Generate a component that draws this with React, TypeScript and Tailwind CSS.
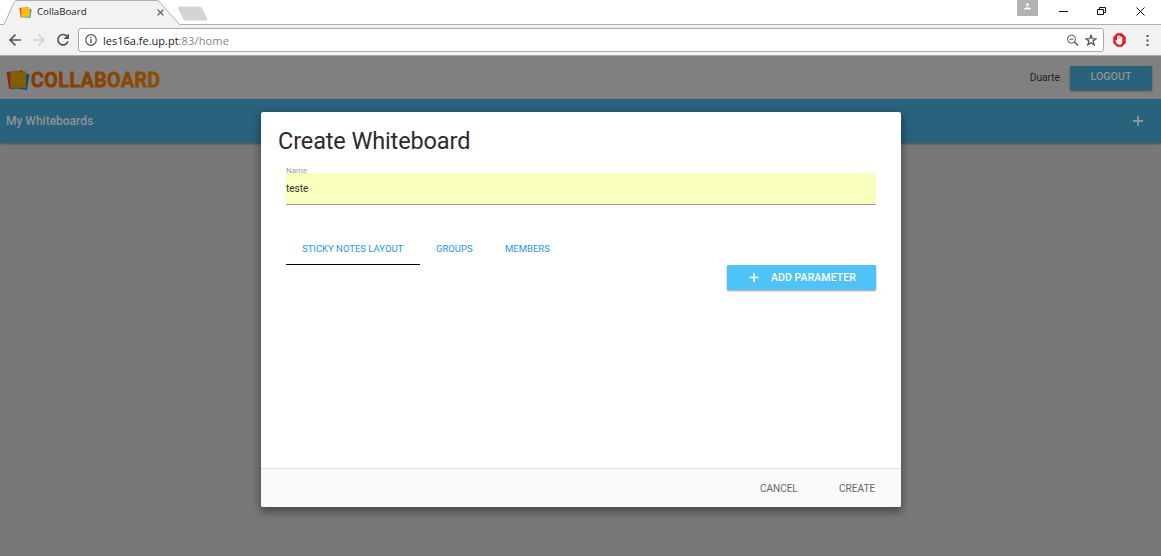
import React from "react";

function NotesIcon({ className, dim = false }: { className: string; dim?: boolean }) {
  return (
    <svg className={className} viewBox="0 0 24 20" preserveAspectRatio="none">
      <path d="M.5 2 17 .5 19 18 3 19Z" fill={dim ? "#88291d" : "#ff5038"} />
      <path d="M7 2 23.500 4 21 20 5 18Z" fill={dim ? "#134f85" : "#2a9cec"} />
      <path d="M13.500 1.500 15 0l1.500 1.500Z" fill={dim ? "#88291d" : "#ff5038"} />
      <path d="M4.500 1.300H20v16.500H4.500Z" fill={dim ? "#806002" : "#ffc107"} />
    </svg>
  );
}

function TabStrip() {
  return (
    <div className="relative flex h-[25px] shrink-0 bg-white">
      <svg className="absolute inset-0 h-[25px] w-[220px]" viewBox="0 0 220 25">
        <path d="M0 24.500H3Q5 24.500 6 22L14 3Q15.200.500 17 .5H157Q159 .5 160 3L177 21Q179 24.500 182 24.500V26H0Z" fill="#f2f2f2" />
        <path d="M0 24.500H4L14 2.500Q15 .5 17 .5H157Q159 .5 160 2.500L179.500 24.500H220" fill="none" stroke="#b0b0b0" />
        <path d="M179.500 6.500H199Q201 6.500 202 8L207 18Q208 20.500 205 20.500H186Q184 20.500 183 18.500L178 8.500Q177.500 6.500 179.500 6.500Z" fill="#d4d4d4" />
      </svg>
      <div className="relative flex h-[25px] w-full items-center border-b border-transparent pl-[19px]">
        <NotesIcon className="h-[11px] w-[13px]" />
        <span className="ml-[5px] w-[120px] font-['Open_Sans',sans-serif] text-[9.700px] leading-none text-[#222]">CollaBoard</span>
        <svg className="h-[7px] w-[7px]" viewBox="0 0 8 8" stroke="#555" strokeWidth="1.400"><path d="m.7.7 6.600 6.600m0-6.600L.7 7.300" /></svg>
        <div className="-mb-px ml-[53px] h-px flex-1 self-end bg-[#b0b0b0]" />
      </div>
      <div className="absolute top-0 right-0 flex h-6">
        <div className="flex h-4 w-[21px] justify-center bg-[#b2b2b2]">
          <svg className="mt-[3px] h-[7px] w-[7px]" viewBox="0 0 7 8" fill="#fff"><circle cx="3.500" cy="2" r="1.700" /><path d="M0 7.500V6q0-1 2-1h3q2 0 2 1v1.500Z" /></svg>
        </div>
        <svg className="h-6 w-[123px]" viewBox="0 0 123 24" fill="none" stroke="#111">
          <path d="M21 11.500h9M59.500 9.500h6v5h-6zM61.500 9V7.500h6v5H66" />
          <path d="m98.500 7.500 8 8m0-8-8 8" />
        </svg>
      </div>
    </div>
  );
}

function AddressBar() {
  return (
    <div className="flex h-[31px] shrink-0 items-center border-b border-[#aaa] bg-[#f2f2f2]">
      <svg className="h-[30px] w-[78px]" viewBox="0 0 78 30" fill="none" strokeWidth="1.700">
        <path d="M21 15H10m5.500-5.500L10 15l5.500 5.500" stroke="#555" />
        <path d="M33 15h11m-5.500-5.500L44 15l-5.500 5.500" stroke="#d2d2d2" />
        <path d="M67.200 11.500A5.200 5.200 0 1 0 68 16.500" stroke="#555" />
        <path d="M69 8.500v5.500h-5.500Z" fill="#555" />
      </svg>
      <div className="flex h-6 w-[1026px] items-center rounded-[3px] border border-[#a9a9a9] bg-white">
        <svg className="ml-[6px] h-3 w-3" viewBox="0 0 12 12"><circle cx="6" cy="6" r="5.300" fill="none" stroke="#555" strokeWidth="1.200" /><path d="M5.300 5h1.400v4H5.300zM5.300 2.700h1.400V4H5.300z" fill="#555" /></svg>
        <span className="ml-[6px] flex-1 font-['Open_Sans',sans-serif] text-[11px] leading-none text-[#222]">les16a.fe.up.pt<span className="tracking-[0.15px] text-[#858585]">:83/home</span></span>
        <svg className="mr-[6px] h-[13px] w-[13px]" viewBox="0 0 13 13" fill="none" stroke="#555"><circle cx="5.500" cy="5.200" r="4" /><path d="M3.500 5.200h4" /><path d="m8.500 8.300 3.500 3.200" strokeWidth="1.500" /></svg>
        <svg className="mr-[6px] h-3 w-3" viewBox="0 0 12 12" fill="none" stroke="#555" strokeWidth="1.300"><path d="m6 1.200 1.300 3.500 3.900.1-3.100 2.300 1.100 3.700L6 8.700l-3.200 2.100 1.100-3.700L.8 4.800l3.900-.1Z" /></svg>
      </div>
      <svg className="ml-[9px] h-[14px] w-[13px]" viewBox="0 0 13 14">
        <path d="M4 .3h5L12.700 4v6L9 13.700H4L.3 10V4Z" fill="#e31b22" />
        <path d="M4 11 2.300 7.500l.7-.5 1 .8V3.400q.6-.7 1.200 0V2.500q.7-.7 1.300 0v.8q.8-.6 1.300.1V4q1-.5 1.500.2v4.700q-.2 2.600-2.200 3.100Z" fill="#fff" />
        <path d="M5.200 3.500V6m1.300-3v3m1.300-2v2.500" fill="none" stroke="#e31b22" strokeWidth=".35" />
      </svg>
      <svg className="ml-[20px] h-[11px] w-[3px]" viewBox="0 0 3 11" fill="#555"><path d="M.5 0h2v2h-2zM.5 4.500h2v2h-2zM.5 9h2v2h-2z" /></svg>
    </div>
  );
}

function Logo() {
  return (
    <div className="flex h-5 items-center">
      <NotesIcon dim className="h-5 w-6" />
      <svg className="h-5 w-[131px] overflow-visible" viewBox="0 0 131 20">
        <defs><linearGradient id="wordmark"><stop stopColor="#863b00" /><stop offset="1" stopColor="#895000" /></linearGradient></defs>
        <text x="1" y="17" textLength="129" lengthAdjust="spacing" fill="url(#wordmark)" stroke="url(#wordmark)" strokeWidth="1.100" strokeLinejoin="round" className="font-[Roboto,sans-serif] text-[19.500px] font-medium">COLLABOARD</text>
      </svg>
    </div>
  );
}

function Plus({ className }: { className: string }) {
  return <svg className={className} viewBox="0 0 10 10" stroke="currentColor" strokeWidth="1.800"><path d="M5 0v10M0 5h10" /></svg>;
}

function Dialog() {
  return (
    <section className="absolute top-[56px] left-[261px] flex h-[395px] w-[640px] flex-col overflow-hidden rounded-[2px] bg-white shadow-[0_4px_8px_1px_rgba(0,0,0,0.4)]">
      <div className="flex flex-1 flex-col pt-[15px] pr-[25px] pl-[25px]">
        <h1 className="-ml-2 h-[28px] text-[23.500px] leading-[28px] tracking-[-0.12px] text-[#2b2b2b]">Create Whiteboard</h1>
        <label className="mt-[10px] h-2 text-[8px] leading-[12px] text-[#a0a0a0]">Name</label>
        <div className="flex h-8 shrink-0 items-center border-b border-[#999] bg-[#faffbd] text-[10px] text-[#333]"><span>teste</span></div>
        <div className="mt-[27px] flex h-[33px] shrink-0 text-[9.500px] leading-[33px] text-[#2795ed]">
          <div className="w-[134px] border-b border-black pl-4">STICKY NOTES LAYOUT</div>
          <div className="w-[70px] pl-4">GROUPS</div>
          <div className="pl-[15px]">MEMBERS</div>
        </div>
        <button className="flex h-[25px] w-[149px] shrink-0 items-center self-end rounded-[1px] bg-[#4fc3f7] pl-[22px] text-[10.500px] font-medium text-white shadow-[0_1px_2px_rgba(0,0,0,0.4)]">
          <Plus className="h-[9px] w-[10px]" /><span className="ml-3 tracking-[0.08px]">ADD PARAMETER</span>
        </button>
      </div>
      <footer className="flex h-[39px] items-center border-t border-[#dedede] bg-[#fafafa] text-[10px] text-[#666]">
        <button className="ml-[499px] w-[79px] text-left">CANCEL</button><button className="tracking-[0.08px]">CREATE</button>
      </footer>
    </section>
  );
}

export default function App() {
  return (
    <div className="flex h-[556px] w-[1161px] flex-col overflow-hidden font-[Roboto,sans-serif]">
      <TabStrip />
      <AddressBar />
      <main className="relative flex flex-1 flex-col bg-[#787878]">
        <header className="flex h-[43px] shrink-0 items-center justify-between bg-[#808080] pr-[9px] pl-[6px]">
          <div className="pt-[4px]"><Logo /></div>
          <div className="flex items-center gap-[10px]">
            <span className="pt-px text-[10.200px] text-[#202020]">Duarte</span>
            <button className="h-6 w-[82px] rounded-[1px] bg-[#28627c] pb-px text-[10.700px] font-medium text-[#929292] shadow-[0_1px_2px_rgba(0,0,0,0.45)]">LOGOUT</button>
          </div>
        </header>
        <nav className="flex h-[44px] shrink-0 items-center justify-between bg-[#28627c] pr-[18px] pl-[6px] text-[12px] font-medium text-[#929292] shadow-[0_1px_2px_rgba(0,0,0,0.35)]">
          <span>My Whiteboards</span><Plus className="h-[10px] w-[10px]" />
        </nav>
        <Dialog />
      </main>
    </div>
  );
}
